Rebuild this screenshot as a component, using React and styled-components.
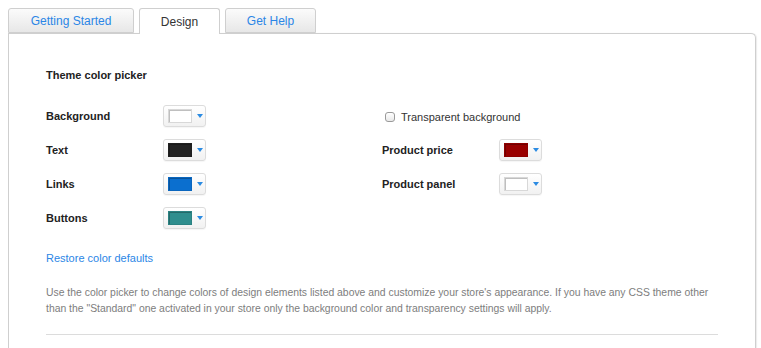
import React, { useState } from 'react';
import styled, { createGlobalStyle } from 'styled-components';

const GlobalStyle = createGlobalStyle`
body {
  margin: 0;
  background: #fff;
  font-family: "Liberation Sans", Arial, sans-serif;
  overflow: hidden;
}
`;

const Page = styled.div`
padding: 8px 5px 0 8px;
`;

const TabBar = styled.div`
display: flex;
gap: 5px;
height: 26px;
position: relative;
z-index: 1;
`;

const Tab = styled.div`
box-sizing: border-box;
width: ${p => p.w}px;
height: ${p => (p.active ? 26 : 25)}px;
display: flex;
align-items: center;
justify-content: center;
font-size: 12px;
color: ${p => (p.active ? '#333' : '#2b86e6')};
border: 1px solid #cfcfcf;
border-bottom: ${p => (p.active ? 'none' : '1px solid #cfcfcf')};
border-radius: 3px 3px 0 0;
background: ${p => (p.active ? '#fff' : 'linear-gradient(#fbfbfb, #e7e7e7)')};
padding-top: ${p => (p.active ? 0 : 1)}px;
cursor: pointer;
`;

const Panel = styled.div`
box-sizing: border-box;
margin-top: -1px;
height: calc(100vh - 33px);
border: 1px solid #cfcfcf;
border-bottom: none;
border-radius: 0 5px 0 0;
box-shadow: 1px 0 1px rgba(0, 0, 0, 0.08);
padding: 34px 37px 0 37px;
`;

const Title = styled.div`
font-size: 11px;
font-weight: bold;
color: #222;
line-height: 14px;
margin-bottom: 23px;
`;

const Grid = styled.div`
display: grid;
grid-template-columns: 336px 336px;
row-gap: 12px;
`;

const Row = styled.div`
display: flex;
align-items: center;
height: 22px;
`;

const Label = styled.div`
width: 117px;
font-size: 11px;
font-weight: bold;
color: #222;
`;

const Picker = styled.div`
box-sizing: border-box;
width: 43px;
height: 22px;
display: flex;
align-items: center;
padding-left: 4px;
gap: 4px;
border: 1px solid #dcdcdc;
border-radius: 3px;
background: linear-gradient(#ffffff, #f1f1f1);
box-shadow: 0 1px 1px rgba(0, 0, 0, 0.04);
`;

const Swatch = styled.div`
box-sizing: border-box;
width: 24px;
height: 14px;
background: ${p => p.color};
box-shadow: inset 1px 1px 0 rgba(0, 0, 0, 0.25);
border: 1px solid ${p => (p.color === '#ffffff' ? '#d8d8d8' : 'rgba(0,0,0,0.08)')};
`;

const Arrow = styled.div`
width: 0;
height: 0;
border-left: 3px solid transparent;
border-right: 3px solid transparent;
border-top: 4px solid #2b8be2;
margin-left: 1px;
`;

const CheckRow = styled.label`
box-sizing: border-box;
display: flex;
align-items: center;
gap: 6px;
height: 22px;
padding: 2px 0 0 3px;
font-size: 11px;
color: #333;
`;

const Check = styled.span`
box-sizing: border-box;
width: 10px;
height: 10px;
border: 1px solid #9a9a9a;
border-radius: 3px;
background: linear-gradient(#fff, #e9e9e9);
`;

const Link = styled.a`
display: block;
margin-top: 22px;
font-size: 11px;
line-height: 14px;
color: #2b86e6;
text-decoration: none;
`;

const Note = styled.p`
margin: 20px 0 0 0;
font-size: 10.4px;
line-height: 16px;
color: #7d7d7d;
width: 672px;
`;

const Divider = styled.div`
margin-top: 17px;
width: 672px;
height: 1px;
background: #dcdcdc;
`;

const ColorPicker = ({ color }) => (
  <Picker>
    <Swatch color={color} />
    <Arrow />
  </Picker>
);

const left = [
  ['Background', '#ffffff'],
  ['Text', '#222222'],
  ['Links', '#0b6fcf'],
  ['Buttons', '#2f8e8e'],
];

const right = [
  ['Product price', '#990000'],
  ['Product panel', '#ffffff'],
];

function App() {
  const [tab, setTab] = useState('Design');
  const tabs = [['Getting Started', 126], ['Design', 81], ['Get Help', 91]];

  return (
    <Page>
      <GlobalStyle />
      <TabBar>
        {tabs.map(([name, w]) => (
          <Tab key={name} w={w} active={tab === name} onClick={() => setTab(name)}>{name}</Tab>
        ))}
      </TabBar>
      <Panel>
        <Title>Theme color picker</Title>
        <Grid>
          <Row><Label>{left[0][0]}</Label><ColorPicker color={left[0][1]} /></Row>
          <CheckRow><Check />Transparent background</CheckRow>
          <Row><Label>{left[1][0]}</Label><ColorPicker color={left[1][1]} /></Row>
          <Row><Label>{right[0][0]}</Label><ColorPicker color={right[0][1]} /></Row>
          <Row><Label>{left[2][0]}</Label><ColorPicker color={left[2][1]} /></Row>
          <Row><Label>{right[1][0]}</Label><ColorPicker color={right[1][1]} /></Row>
          <Row><Label>{left[3][0]}</Label><ColorPicker color={left[3][1]} /></Row>
        </Grid>
        <Link href="#">Restore color defaults</Link>
        <Note>
          Use the color picker to change colors of design elements listed above and customize your store's appearance. If you have any CSS theme other than the "Standard" one activated in your store only the background color and transparency settings will apply.
        </Note>
        <Divider />
      </Panel>
    </Page>
  );
}

export default App;
